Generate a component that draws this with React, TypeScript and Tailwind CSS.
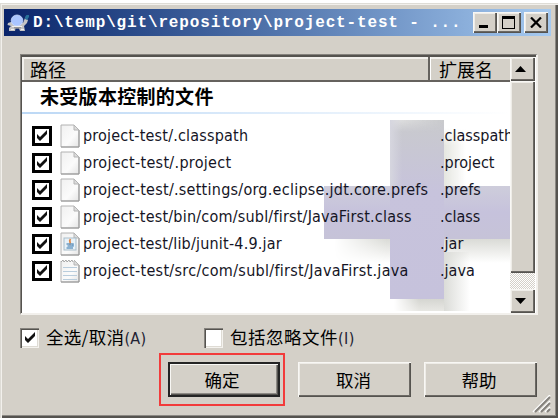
import React from "react";

type Kind = "file" | "jar" | "java";

const rows: { name: string; ext: string; kind: Kind; track: string }[] = [
  { name: "project-test/.classpath", ext: ".classpath", kind: "file", track: "tracking-[0.2px]" },
  { name: "project-test/.project", ext: ".project", kind: "file", track: "tracking-[0.3px]" },
  { name: "project-test/.settings/org.eclipse.jdt.core.prefs", ext: ".prefs", kind: "file", track: "tracking-[0.26px]" },
  { name: "project-test/bin/com/subl/first/JavaFirst.class", ext: ".class", kind: "file", track: "tracking-[0.21px]" },
  { name: "project-test/lib/junit-4.9.jar", ext: ".jar", kind: "jar", track: "tracking-[0.2px]" },
  { name: "project-test/src/com/subl/first/JavaFirst.java", ext: ".java", kind: "java", track: "tracking-[0.3px]" },
];

const raised =
  "bg-[#d4d0c8] shadow-[inset_1px_1px_#f8f7f4,inset_-1px_-1px_#55534f,inset_-2px_-2px_#6c6964,inset_2px_2px_#eeece7]";

const latin = "font-['DejaVu_Sans_Condensed','DejaVu_Sans','Noto_Sans_CJK_SC',sans-serif] [font-stretch:condensed]";
const cjk = "font-['Noto_Sans_CJK_SC',sans-serif]";

function Tick() {
  return (
    <svg width="12" height="12" viewBox="0 0 12 12" className="block">
      <path d="M1 4 L4 7 L11 0 V4 L4 11 L1 8 Z" fill="#111" />
    </svg>
  );
}

function FileIcon({ kind }: { kind: Kind }) {
  return (
    <svg width="20" height="24" viewBox="0 0 20 24" className="block shrink-0">
      <defs>
        <linearGradient id="paper" x1="0" y1="0" x2="1" y2="1">
          <stop offset="0" stopColor="#f0f0f0" />
          <stop offset=".6" stopColor="#fbfbfb" />
          <stop offset="1" stopColor="#e4e4e4" />
        </linearGradient>
      </defs>
      <path d="M1 1 H14 L19 6 V23 H1 Z" fill="url(#paper)" stroke="#b2b2b2" />
      <path d="M19 6 V23 H1" fill="none" stroke="#979797" />
      <path d="M14 1 V6 H19 Z" fill="#dcdcdc" stroke="#b4b4b4" />
      {kind === "jar" && (
        <>
          <rect x="4" y="6" width="12" height="12" fill="#e7f1f8" stroke="#a9bdc9" />
          <path d="M10.5 7 C8 10 12 10 9.5 13" stroke="#e38c4c" strokeWidth="1.8" fill="none" />
          <path d="M6.5 12 H13 V14 H7.500 M6.500 16 H13" stroke="#6c9cc4" strokeWidth="1.500" fill="none" />
        </>
      )}
      {kind === "java" && (
        <>
          <path d="M0 0 H14 V2 H0 Z" fill="#fff" />
          <path d="M1 3 L3 1 L4 3 L6 1 L7 3 L9 1 L10 3 L12 1 L13 3" fill="none" stroke="#a8a8a8" />
          <path d="M3 8.500 H17 M3 12.500 H17 M3 16.500 H17 M3 20.500 H17" stroke="#b9cddd" />
        </>
      )}
    </svg>
  );
}

function Turtle() {
  return (
    <svg width="24" height="18" viewBox="0 0 24 18" className="block shrink-0">
      <path d="M4 8 L1 9 L0.500 11 L4 12 L2 14 V17 H8 L8.500 14.500 H12 L13 17 H18 L17 12 L20 9 L21 6 L18 4 L16 9 Z" fill="#c4c4c4" />
      <path d="M18 3 L19.500 1 H22 V3 L20 6 L18 5 Z" fill="#28719a" />
      <ellipse cx="10" cy="6.500" rx="5.800" ry="5.500" fill="#a9c5ff" stroke="#c9daff" strokeWidth=".8" />
      <path d="M5 12.500 H15 M4 15.500 H7 M14 15.500 H17" stroke="#f0f0f0" />
      <path d="M7 13.800 H14" stroke="#858585" />
    </svg>
  );
}

function ArrowButton({ down = false }: { down?: boolean }) {
  return (
    <div className={`${raised} flex h-[24px] w-[25px] shrink-0 items-center justify-center pr-1`}>
      <svg width="11" height="6" viewBox="0 0 11 6">
        <path d={down ? "M0 0 H11 L5.500 6 Z" : "M0 6 L5.500 0 L11 6 Z"} fill="#000" />
      </svg>
    </div>
  );
}

function SmallCheck({ checked = false }: { checked?: boolean }) {
  return (
    <div className="flex h-[20px] w-[19px] items-center justify-center bg-white shadow-[inset_1px_1px_#85827d,inset_2px_2px_#55534f,inset_-1px_-1px_#f4f2ee,inset_-2px_-2px_#dedbd4]">
      {checked && <Tick />}
    </div>
  );
}

function Watermark() {
  return (
    <div className="pointer-events-none absolute inset-x-0 bottom-0 top-[25px]">
      <div className="absolute left-[312px] top-[157px] h-[24px] w-[176px] bg-gradient-to-b from-[#dadbd6] to-white [mask-image:linear-gradient(to_right,transparent,black_30%)]" />
      <div className="absolute left-[422px] top-[46px] h-[58px] w-[22px] bg-gradient-to-r from-[#e5e6e0] to-transparent [mask-image:linear-gradient(to_bottom,transparent,black_30%)]" />
      <div className="absolute left-[422px] top-[170px] h-[59px] w-[26px] bg-gradient-to-r from-[#dbdcd8] to-transparent" />
      <div className="absolute left-[372px] top-[217px] h-[12px] w-[50px] bg-gradient-to-b from-[#d5d6d1] to-[#e8e8e4] [mask-image:linear-gradient(to_right,transparent,black_50%)]" />
      <div className="absolute left-[302px] top-[104px] h-[53px] w-[186px] bg-gradient-to-b from-[#cecddb] via-[#c6c2dc] to-[#c6c3d8]" />
      <div className="absolute left-[368px] top-[38px] h-[179px] w-[54px] bg-gradient-to-b from-[#c9cacd] via-[#c7c3dc] via-40% to-[#c6c2dc]" />
      <div className="absolute left-[368px] top-[38px] h-[12px] w-[54px] bg-gradient-to-r from-[#e2e2e2] to-transparent [mask-image:linear-gradient(to_bottom,black,transparent)]" />
      <div className="absolute left-[368px] top-[38px] h-[66px] w-[12px] bg-gradient-to-r from-[#d6d6df] to-transparent" />
    </div>
  );
}

export default function App() {
  return (
    <div className={`h-[420px] w-[559px] overflow-hidden bg-white pt-[3px] text-black ${latin}`}>
      <div className="flex h-[415px] w-[558px] flex-col bg-[#d4d0c8] pl-[4px] pr-[7px] pt-[6px] shadow-[inset_1px_1px_#dedcd6,inset_2px_2px_#f2f0ec,inset_-2px_-2px_#55534f,inset_-3px_-3px_#8c8984]">
        <div className="flex h-[27px] shrink-0 items-center bg-gradient-to-r from-[#0a246a] to-[#a6caf0] pl-[3px] pr-[3px]">
          <Turtle />
          <div className="ml-[2px] w-[432px] whitespace-pre font-['Liberation_Mono',monospace] text-[16px] font-bold leading-[24px] tracking-[0.85px] text-white">
            {"D:\\temp\\git\\repository\\project-test - ..."}
          </div>
          <div className="ml-auto flex">
            <div className={`${raised} flex h-[21px] w-[24px] items-end pb-[5px] pl-[6px]`}>
              <div className="h-[3px] w-[9px] bg-black" />
            </div>
            <div className={`${raised} flex h-[21px] w-[24px] items-center justify-center pr-[2px]`}>
              <div className="h-[13px] w-[13px] border border-t-[3px] border-black" />
            </div>
            <div className={`${raised} ml-[3px] flex h-[21px] w-[24px] items-center justify-center pr-px`}>
              <svg width="12" height="11" viewBox="0 0 12 11">
                <path d="M1 0.500 L11 10.500 M11 0.500 L1 10.500" stroke="#000" strokeWidth="2.200" />
              </svg>
            </div>
          </div>
        </div>

        <div className="ml-[16px] mt-[18px] h-[261px] w-[518px] shrink-0 border-l border-t border-b-2 border-r-2 border-b-[#f2f0ec] border-l-[#85827d] border-r-[#f2f0ec] border-t-[#85827d]">
          <div className="relative flex h-full border-l border-t-2 border-[#55534f] bg-white">
            <Watermark />
            <div className="relative flex w-[488px] flex-col overflow-hidden">
              <div className={`flex h-[25px] shrink-0 border-b-2 border-[#65625e] bg-[#d4d0c8] text-[18px] leading-[25px] shadow-[inset_2px_2px_#f2f0ec] ${cjk}`}>
                <div className="h-[23px] w-[408px] border-r-2 border-[#65625e] pl-[8px]">路径</div>
                <div className="h-[23px] flex-1 border-l border-white pl-[8px]">扩展名</div>
              </div>
              <div className={`h-[30px] shrink-0 pl-[18px] text-[19px] font-bold leading-[28px] tracking-[0.300px] ${cjk}`}>未受版本控制的文件</div>
              <div className="h-[2px] shrink-0 bg-gradient-to-r from-[#bcd8f5] to-white" />
              <div className="h-[8px] shrink-0" />
              {rows.map((r) => (
                <div key={r.name} className="flex h-[27px] shrink-0 items-center whitespace-nowrap text-[16px] leading-[20px] text-[#151525]">
                  <div className="ml-[10px] flex h-[20px] w-[20px] shrink-0 items-center justify-center border-[3px] border-black bg-white">
                    <Tick />
                  </div>
                  <div className="ml-[8px]">
                    <FileIcon kind={r.kind} />
                  </div>
                  <div className={`ml-[3px] w-[357px] shrink-0 ${r.track}`}>{r.name}</div>
                  <div>{r.ext}</div>
                </div>
              ))}
            </div>
            <div className="relative flex w-[25px] flex-col bg-[#eae8e4]">
              <ArrowButton />
              <div className={`${raised} h-[192px] w-[25px] shrink-0`} />
              <div className="flex-1 bg-[repeating-conic-gradient(#ffffff_0_25%,#d4d0c8_0_50%)] bg-[length:2px_2px]" />
              <ArrowButton down />
            </div>
          </div>
        </div>

        <div className={`ml-[16px] mt-[12px] flex h-[22px] shrink-0 items-center text-[17.500px] leading-[22px] ${cjk}`}>
          <SmallCheck checked />
          <div className="ml-[7px] w-[158px] whitespace-nowrap tracking-[0.3px]">
            全选/取消<span className="font-['DejaVu_Sans_Condensed','DejaVu_Sans',sans-serif] text-[16px] text-[#223] [font-stretch:condensed]">(A)</span>
          </div>
          <SmallCheck />
          <div className="ml-[7px] whitespace-nowrap tracking-[0.5px]">
            包括忽略文件<span className="font-['DejaVu_Sans_Condensed','DejaVu_Sans',sans-serif] text-[16px] text-[#223] [font-stretch:condensed]">(I)</span>
          </div>
        </div>

        <div className={`ml-[155px] mt-[4px] flex h-[53px] shrink-0 items-center text-[17.500px] ${cjk}`}>
          <div className="flex h-[53px] w-[126px] items-center border-2 border-[#f23b3b] pl-[7px]">
            <button className="h-[35px] w-[112px] border-2 border-[#242424] bg-[#d4d0c8] pr-[4px] leading-[29px] shadow-[inset_1px_1px_#f8f7f4,inset_-1px_-1px_#55534f,inset_-2px_-2px_#8c8984]">确定</button>
          </div>
          <button className={`${raised} ml-[13px] h-[35px] w-[113px] pr-[2px] leading-[32px]`}>取消</button>
          <button className={`${raised} ml-[13px] h-[35px] w-[113px] pr-[3px] leading-[32px]`}>帮助</button>
        </div>
        <svg width="19" height="18" viewBox="0 0 19 18" className="-mt-[11px] ml-auto shrink-0">
          <path d="M1 17 L18 0 M7 17 L18 6 M13 17 L18 12" stroke="#fff" strokeWidth="1.500" />
          <path d="M3 17 L18 2 M9 17 L18 8 M15 17 L18 14" stroke="#85827d" strokeWidth="2" />
        </svg>
      </div>
    </div>
  );
}
